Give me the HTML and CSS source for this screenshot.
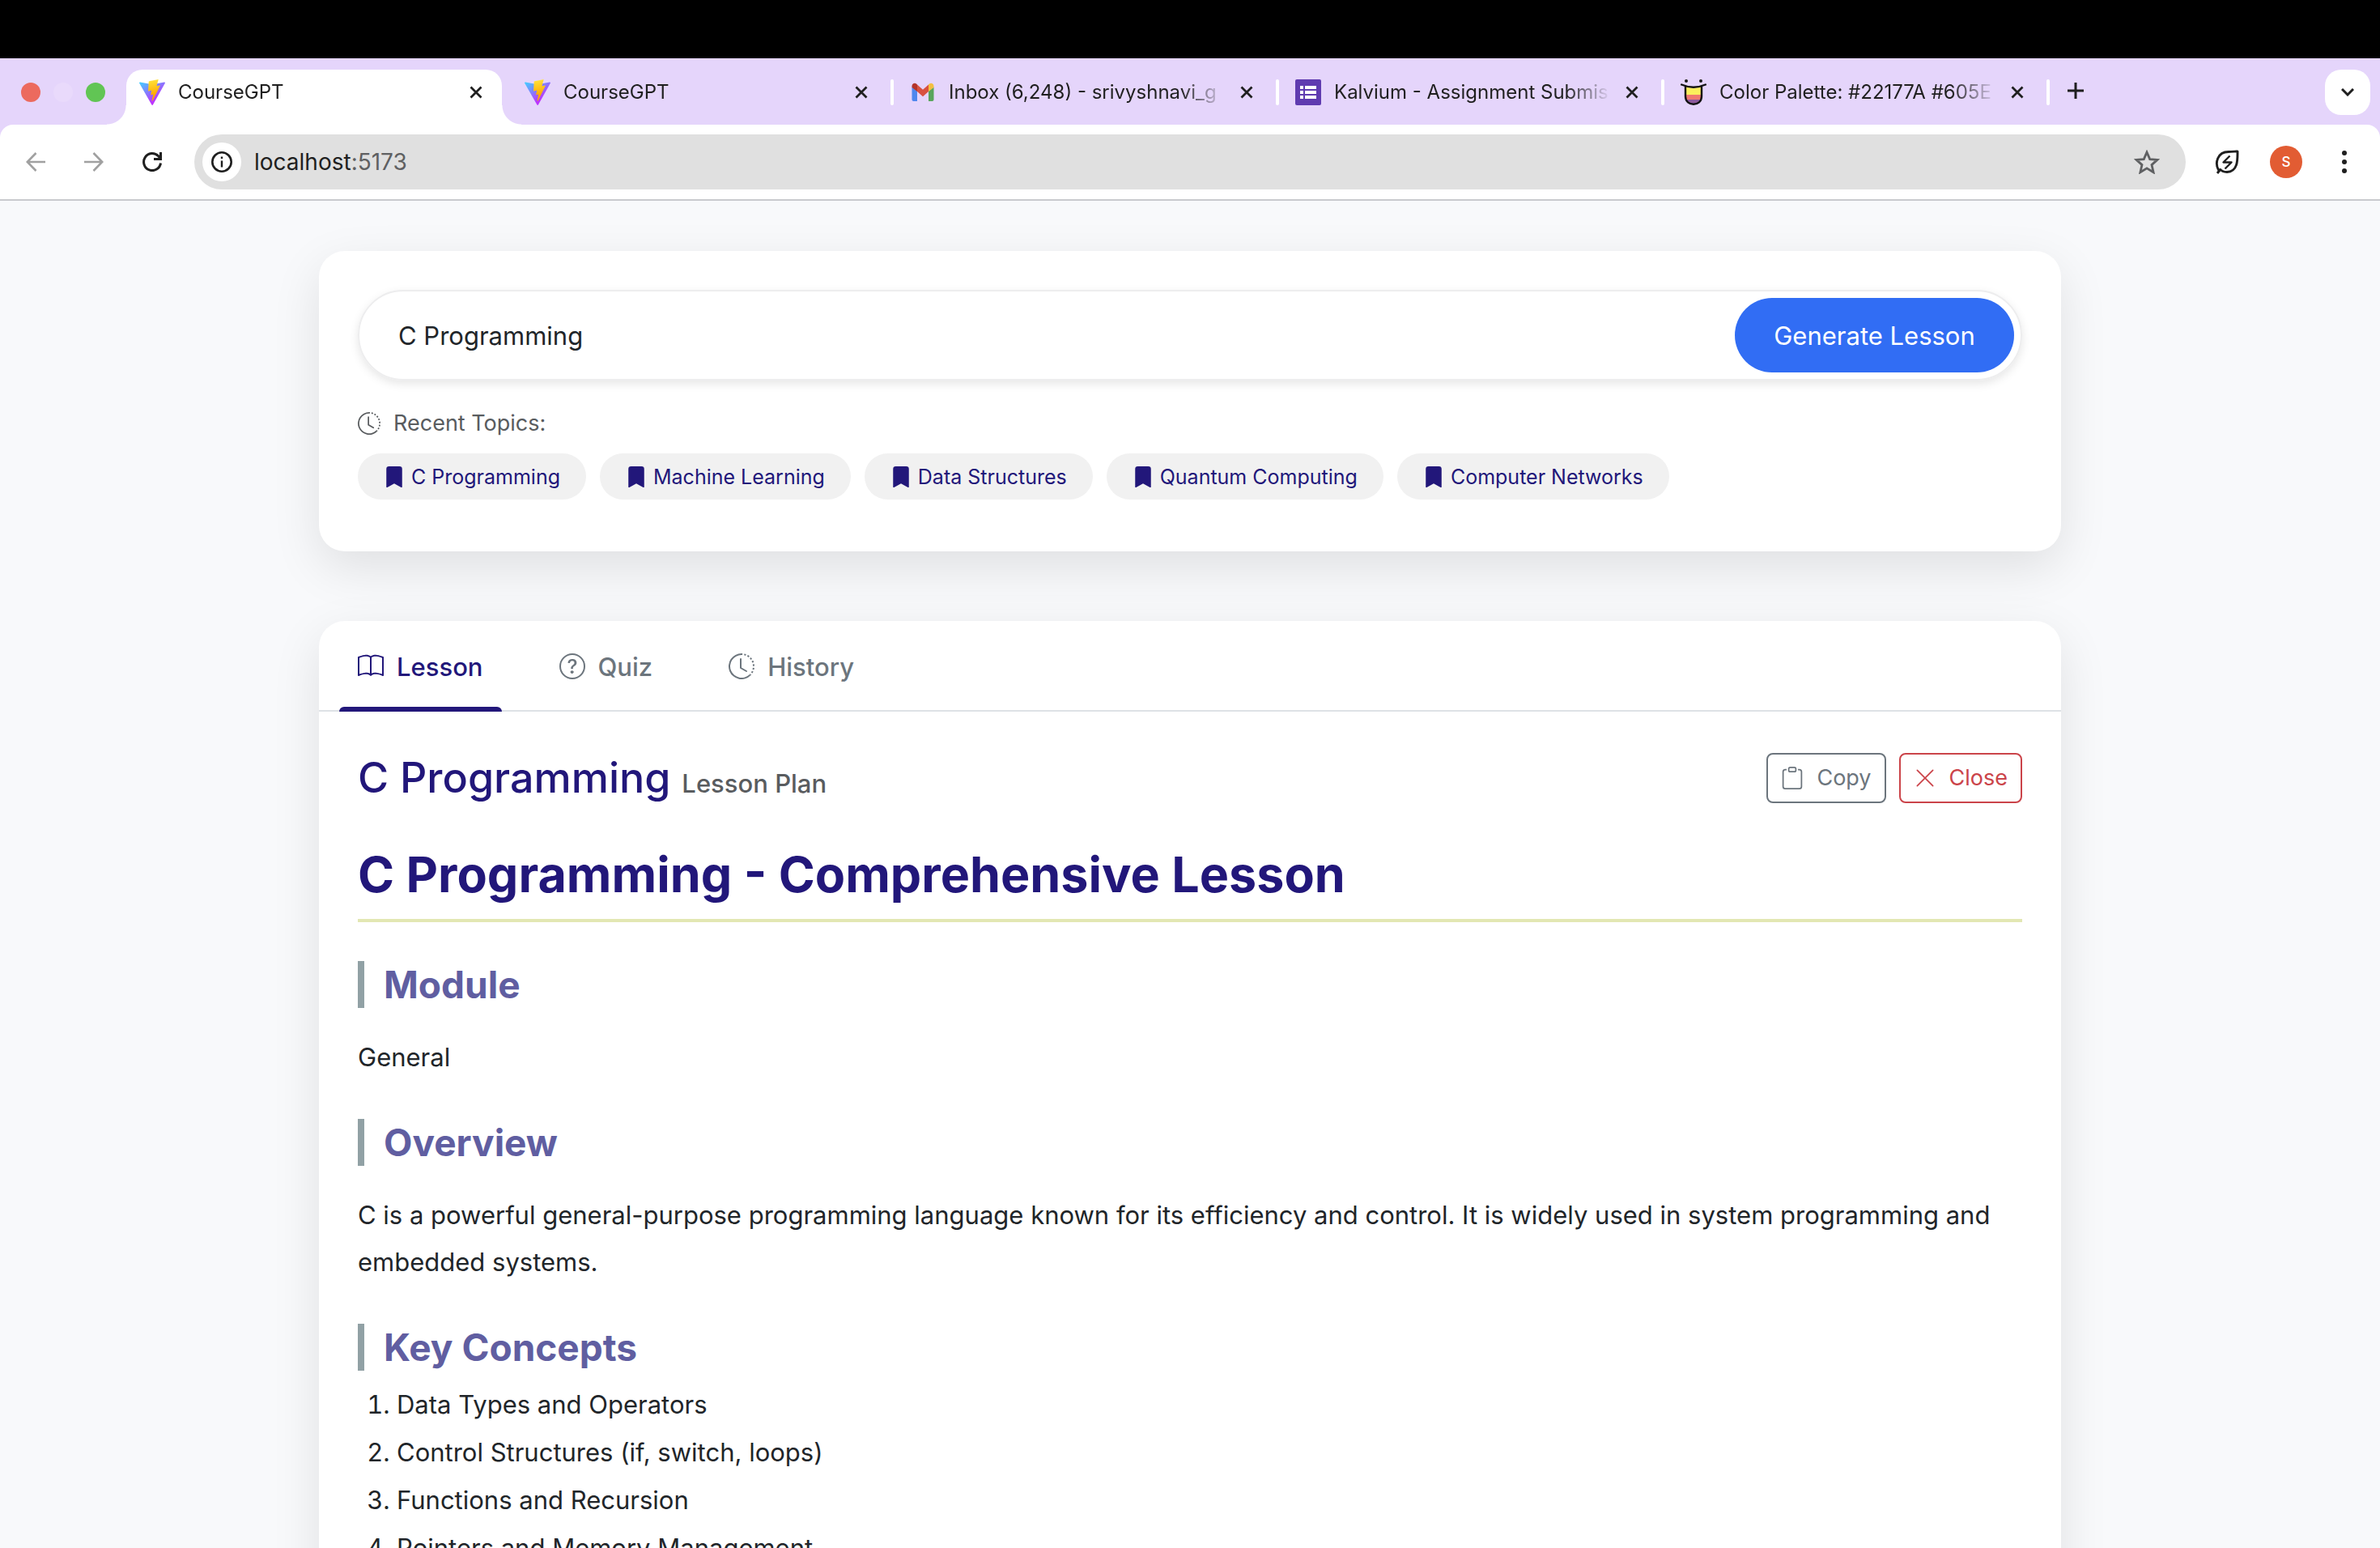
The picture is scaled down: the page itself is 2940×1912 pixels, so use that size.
FILE: index.html
```html
<!DOCTYPE html>
<html lang="en">
<head>
<meta charset="utf-8">
<meta name="viewport" content="width=device-width, initial-scale=1">
<title>CourseGPT</title>
<link rel="stylesheet" href="styles.css">
</head>
<body>
<svg class="sprite" aria-hidden="true">
  <defs>
    <linearGradient id="vite-a" x1="0" x2="0.6" y1="0" y2="0.8"><stop offset="0" stop-color="#41d1ff"/><stop offset="1" stop-color="#bd34fe"/></linearGradient>
    <linearGradient id="vite-b" x1="0.43" x2="0.5" y1="0.02" y2="0.73"><stop offset="0" stop-color="#ffea83"/><stop offset="0.08" stop-color="#ffdd35"/><stop offset="1" stop-color="#ffa800"/></linearGradient>
  </defs>
  <symbol id="vite" viewBox="0 0 256 257">
    <path fill="url(#vite-a)" d="M255.153 37.938L134.897 252.976c-2.483 4.44-8.862 4.466-11.382.048L.875 37.958c-2.746-4.814 1.371-10.646 6.827-9.67l120.385 21.517a6.537 6.537 0 0 0 2.322-.004l117.867-21.483c5.438-.991 9.574 4.796 6.877 9.62Z"/>
    <path fill="url(#vite-b)" d="M185.432.063L96.44 17.501a3.268 3.268 0 0 0-2.634 3.014l-5.474 92.456a3.268 3.268 0 0 0 3.997 3.378l24.777-5.718c2.318-.535 4.413 1.507 3.936 3.838l-7.361 36.047c-.495 2.426 1.782 4.5 4.151 3.78l15.304-4.649c2.372-.72 4.652 1.36 4.15 3.788l-11.698 56.621c-.732 3.542 3.979 5.473 5.943 2.437l1.313-2.028l72.516-144.72c1.215-2.423-.88-5.186-3.54-4.672l-25.505 4.922c-2.396.462-4.435-1.77-3.759-4.114l16.646-57.705c.677-2.35-1.37-4.583-3.769-4.113Z"/>
  </symbol>
  <symbol id="cross" viewBox="0 0 16 16"><path d="M1.500 1.500l13 13M14.500 1.500l-13 13" fill="none" stroke="currentColor" stroke-width="2.800"/></symbol>
  <symbol id="clock" viewBox="0 0 16 16">
    <path d="M8.515 1.019A7 7 0 0 0 8 1V0a8 8 0 0 1 .589.022zm2.004.45a7 7 0 0 0-.985-.299l.219-.976q.576.129 1.126.342zm1.37.71a7 7 0 0 0-.439-.27l.493-.87a8 8 0 0 1 .979.654l-.615.789a7 7 0 0 0-.418-.302zm1.834 1.79a7 7 0 0 0-.653-.796l.724-.69q.406.429.747.91zm.744 1.352a7 7 0 0 0-.214-.468l.893-.45a8 8 0 0 1 .45 1.088l-.95.313a7 7 0 0 0-.179-.483m.53 2.507a7 7 0 0 0-.1-1.025l.985-.17q.1.58.116 1.17zm-.131 1.538q.05-.254.081-.51l.993.123a8 8 0 0 1-.23 1.155l-.964-.267q.069-.247.12-.501m-.952 2.379q.276-.436.486-.908l.914.405q-.24.54-.555 1.038zm-.964 1.205q.183-.183.35-.378l.758.653a8 8 0 0 1-.401.432z"/>
    <path d="M8 1a7 7 0 1 0 4.95 11.95l.707.707A8.001 8.001 0 1 1 8 0z"/>
    <path d="M7.500 3a.5.5 0 0 1 .5.5v5.210l3.248 1.856a.5.5 0 0 1-.496.868l-3.500-2A.5.5 0 0 1 7 9V3.500a.5.5 0 0 1 .5-.5"/>
  </symbol>
  <symbol id="bookmark" viewBox="0 0 16 16"><path d="M2 2v13.500a.5.5 0 0 0 .74.439L8 13.069l5.260 2.870A.5.5 0 0 0 14 15.500V2a2 2 0 0 0-2-2H4a2 2 0 0 0-2 2"/></symbol>
</svg>

<div class="menubar"></div>

<header class="browser">
  <div class="tabstrip">
    <div class="lights">
      <span class="light light-red"></span>
      <span class="light light-off"></span>
      <span class="light light-green"></span>
    </div>
    <div class="tab tab-active">
      <svg class="favicon"><use href="#vite"/></svg>
      <span class="tab-title">CourseGPT</span>
      <button class="tab-close" aria-label="Close tab"><svg><use href="#cross"/></svg></button>
    </div>
    <span class="divider divider-hidden"></span>
    <div class="tab">
      <svg class="favicon"><use href="#vite"/></svg>
      <span class="tab-title">CourseGPT</span>
      <button class="tab-close" aria-label="Close tab"><svg><use href="#cross"/></svg></button>
    </div>
    <span class="divider"></span>
    <div class="tab">
      <svg class="favicon" viewBox="0 0 32 32">
        <path fill="#4f87ee" d="M2.500 9.500L9 14.500V27H4.500a2 2 0 0 1-2-2z"/>
        <path fill="#58a55c" d="M23 14.500l6.500-5V25a2 2 0 0 1-2 2H23z"/>
        <path fill="#d85140" d="M9 6.500l7 6.200 7-6.200V15l-7 6.200L9 15z"/>
        <path fill="#b3342b" d="M2.500 8.500c0-3.500 3.500-4.500 5.500-3L9 6.500V15l-6.500-5z"/>
        <path fill="#f2bf42" d="M29.500 8.500c0-3.500-3.500-4.500-5.500-3l-1 1V15l6.500-5z"/>
      </svg>
      <span class="tab-title">Inbox (6,248) - srivyshnavi_g</span>
      <button class="tab-close" aria-label="Close tab"><svg><use href="#cross"/></svg></button>
    </div>
    <span class="divider"></span>
    <div class="tab">
      <svg class="favicon" viewBox="0 0 32 32">
        <rect width="32" height="32" rx="2" fill="#5f3bb0"/>
        <path fill="#fff" d="M6 8h4v4H6zM12 8h14v4H12zM6 14h4v4H6zM12 14h14v4H12zM6 20h4v4H6zM12 20h14v4H12z"/>
      </svg>
      <span class="tab-title">Kalvium - Assignment Submis</span>
      <button class="tab-close" aria-label="Close tab"><svg><use href="#cross"/></svg></button>
    </div>
    <span class="divider"></span>
    <div class="tab">
      <svg class="favicon" viewBox="0 0 32 32">
        <circle cx="7" cy="2" r="2" fill="#1b1b1b"/><circle cx="25" cy="2" r="2" fill="#1b1b1b"/>
        <path fill="#fbee5c" d="M6 9q10 3 20 0v10H6z"/>
        <path fill="#ef7770" d="M6 19h20v6H6z"/>
        <path fill="#8d5a9c" d="M7 25h18q-3 5.500-9 5.500T7 25z"/>
        <path fill="none" stroke="#111" stroke-width="2.400" stroke-linecap="round" d="M1.200 6.500Q16 13 30.800 6.500M6 9v12c0 13 20 13 20 0V9"/>
      </svg>
      <span class="tab-title">Color Palette: #22177A #605E</span>
      <button class="tab-close" aria-label="Close tab"><svg><use href="#cross"/></svg></button>
    </div>
    <span class="divider"></span>
    <button class="new-tab" aria-label="New tab">
      <svg viewBox="0 0 20 20"><path d="M10 0v20M0 10h20" fill="none" stroke="currentColor" stroke-width="3"/></svg>
    </button>
    <button class="tab-search" aria-label="Search tabs">
      <svg viewBox="0 0 16 10"><path d="M1 1l7 7 7-7" fill="none" stroke="currentColor" stroke-width="3"/></svg>
    </button>
  </div>

  <div class="toolbar">
    <div class="navs">
      <button class="nav nav-off" aria-label="Back"><svg viewBox="0 0 24 24"><path d="M24 12H2M12.500 1L1.800 12l10.700 11" fill="none" stroke="currentColor" stroke-width="2.600"/></svg></button>
      <button class="nav nav-off" aria-label="Forward"><svg viewBox="0 0 24 24"><path d="M0 12h22M11.500 1l10.700 11-10.700 11" fill="none" stroke="currentColor" stroke-width="2.600"/></svg></button>
      <button class="nav" aria-label="Reload"><svg viewBox="0 0 24 24"><path d="M22.500 13.500A10.500 10.500 0 1 1 19.500 4.600L22 7.500" fill="none" stroke="currentColor" stroke-width="3"/><path d="M24 0v10H14V7h7V0z" fill="currentColor"/></svg></button>
    </div>
    <div class="omnibox">
      <button class="site-info" aria-label="Site information">
        <svg viewBox="0 0 26 26"><circle cx="13" cy="13" r="11.700" fill="none" stroke="currentColor" stroke-width="2.600"/><path d="M11.800 11.500h2.400v8h-2.400zM11.800 6.500h2.400v2.600h-2.400z" fill="currentColor"/></svg>
      </button>
      <div class="url" role="textbox" aria-label="Address">localhost<span class="port">:5173</span></div>
      <button class="star" aria-label="Bookmark this page">
        <svg viewBox="0 0 32 30"><path d="M16 3l3.700 8.600 9.300.8-7 6.200 2.100 9.200-8.100-4.900-8.100 4.900L10 18.600l-7-6.200 9.300-.8z" fill="none" stroke="currentColor" stroke-width="2.800"/></svg>
      </button>
    </div>
    <div class="actions">
      <button class="action" aria-label="Energy saver">
        <svg viewBox="0 0 32 32"><path d="M4.500 26C0 18 2.500 3.500 17 3.500c5 0 11-1 11-.5 0 9 1 25-13 25.500-5 0-7.500-2-9-4M3 30l4-5" fill="none" stroke="currentColor" stroke-width="2.900"/><path d="M18.500 8.500L10.500 16.500H20.500L12.500 24.500" fill="none" stroke="currentColor" stroke-width="2.400" stroke-linejoin="round"/></svg>
      </button>
      <button class="avatar" aria-label="Profile">S</button>
      <button class="action" aria-label="Menu">
        <svg viewBox="0 0 32 32"><circle cx="16" cy="5" r="3"/><circle cx="16" cy="16" r="3"/><circle cx="16" cy="27" r="3"/></svg>
      </button>
    </div>
  </div>
</header>

<main class="page">
  <section class="card search-card">
    <form class="search">
      <input class="search-input" type="text" value="C Programming" aria-label="Topic">
      <button class="search-button" type="button">Generate Lesson</button>
    </form>
    <div class="recent">
      <svg class="icon-sm"><use href="#clock"/></svg>
      <span>Recent Topics:</span>
    </div>
    <div class="chips">
      <button class="chip"><svg class="chip-icon"><use href="#bookmark"/></svg>C Programming</button>
      <button class="chip"><svg class="chip-icon"><use href="#bookmark"/></svg>Machine Learning</button>
      <button class="chip"><svg class="chip-icon"><use href="#bookmark"/></svg>Data Structures</button>
      <button class="chip"><svg class="chip-icon"><use href="#bookmark"/></svg>Quantum Computing</button>
      <button class="chip"><svg class="chip-icon"><use href="#bookmark"/></svg>Computer Networks</button>
    </div>
  </section>

  <section class="card lesson-card">
    <nav class="views">
      <button class="view view-active">
        <svg class="icon" viewBox="0 0 16 16"><path d="M1 2.828c.885-.37 2.154-.769 3.388-.893 1.330-.134 2.458.063 3.112.752v9.746c-.935-.53-2.120-.603-3.213-.493-1.180.12-2.370.461-3.287.811zm7.500-.141c.654-.689 1.782-.886 3.112-.752 1.234.124 2.503.523 3.388.893v9.923c-.918-.35-2.107-.692-3.287-.81-1.094-.111-2.278-.039-3.213.492zM8 1.783C7.015.936 5.587.81 4.287.94c-1.514.153-3.042.672-3.994 1.105A.5.5 0 0 0 0 2.500v11a.5.5 0 0 0 .707.455c.882-.4 2.303-.881 3.680-1.020 1.409-.142 2.590.087 3.223.877a.5.5 0 0 0 .78 0c.633-.79 1.814-1.019 3.222-.877 1.378.139 2.800.62 3.681 1.020A.5.5 0 0 0 16 13.500v-11a.5.5 0 0 0-.293-.455c-.952-.433-2.480-.952-3.994-1.105C10.413.809 8.985.936 8 1.783"/></svg>
        Lesson
      </button>
      <button class="view">
        <svg class="icon" viewBox="0 0 16 16"><path d="M8 15A7 7 0 1 1 8 1a7 7 0 0 1 0 14m0 1A8 8 0 1 0 8 0a8 8 0 0 0 0 16"/><path d="M5.255 5.786a.237.237 0 0 0 .241.247h.825c.138 0 .248-.113.266-.25.09-.656.54-1.134 1.342-1.134.686 0 1.314.343 1.314 1.168 0 .635-.374.927-.965 1.371-.673.489-1.206 1.060-1.168 1.987l.003.217a.25.25 0 0 0 .25.246h.811a.25.25 0 0 0 .25-.25v-.105c0-.718.273-.927 1.010-1.486.609-.463 1.244-.977 1.244-2.056 0-1.511-1.276-2.241-2.673-2.241-1.267 0-2.655.59-2.750 2.286m1.557 5.763c0 .533.425.927 1.010.927.609 0 1.028-.394 1.028-.927 0-.552-.42-.94-1.029-.94-.584 0-1.009.388-1.009.94"/></svg>
        Quiz
      </button>
      <button class="view">
        <svg class="icon"><use href="#clock"/></svg>
        History
      </button>
    </nav>

    <div class="lesson">
      <div class="lesson-head">
        <h3 class="topic">C Programming <small class="topic-kind">Lesson Plan</small></h3>
        <div class="lesson-actions">
          <button class="btn btn-copy">
            <svg class="icon-sm" viewBox="0 0 16 16"><path d="M4 1.500H3a2 2 0 0 0-2 2V14a2 2 0 0 0 2 2h10a2 2 0 0 0 2-2V3.500a2 2 0 0 0-2-2h-1v1h1a1 1 0 0 1 1 1V14a1 1 0 0 1-1 1H3a1 1 0 0 1-1-1V3.500a1 1 0 0 1 1-1h1z"/><path d="M9.500 1a.5.5 0 0 1 .5.5v1a.5.5 0 0 1-.5.5h-3a.5.5 0 0 1-.5-.5v-1a.5.5 0 0 1 .5-.5zm-3-1A1.500 1.500 0 0 0 5 1.500v1A1.500 1.500 0 0 0 6.500 4h3A1.500 1.500 0 0 0 11 2.500v-1A1.500 1.500 0 0 0 9.500 0z"/></svg>
            Copy
          </button>
          <button class="btn btn-close">
            <svg class="icon-sm" viewBox="0 0 16 16"><path d="M2.146 2.854a.5.5 0 1 1 .708-.708L8 7.293l5.146-5.147a.5.5 0 0 1 .708.708L8.707 8l5.147 5.146a.5.5 0 0 1-.708.708L8 8.707l-5.146 5.147a.5.5 0 0 1-.708-.708L7.293 8z"/></svg>
            Close
          </button>
        </div>
      </div>

      <article class="content">
        <h1>C Programming - Comprehensive Lesson</h1>
        <h2>Module</h2>
        <p>General</p>
        <h2>Overview</h2>
        <p>C is a powerful general-purpose programming language known for its efficiency and control. It is widely used in system programming and embedded systems.</p>
        <h2 class="before-list">Key Concepts</h2>
        <ol>
          <li>Data Types and Operators</li>
          <li>Control Structures (if, switch, loops)</li>
          <li>Functions and Recursion</li>
          <li>Pointers and Memory Management</li>
        </ol>
      </article>
    </div>
  </section>
</main>
</body>
</html>
```
FILE: styles.css
```css
* {
  box-sizing: border-box;
}

body {
  display: flex;
  flex-direction: column;
  height: 100vh;
  margin: 0;
  overflow: hidden;
  background: #f8f9fb;
  color: #212529;
  font-family: Inter, "Liberation Sans", sans-serif;
  font-size: 31px;
}

button {
  display: flex;
  align-items: center;
  justify-content: center;
  flex-shrink: 0;
  margin: 0;
  padding: 0;
  border: 0;
  background: none;
  color: inherit;
  font: inherit;
  white-space: nowrap;
}

svg {
  flex-shrink: 0;
  fill: currentColor;
}

.sprite {
  position: absolute;
  width: 0;
  height: 0;
}

/* ---------- browser chrome ---------- */

.menubar {
  flex: 0 0 72px;
  background: #000;
}

.browser {
  flex-shrink: 0;
  background: #e5d5fb;
  color: #1f1f1f;
}

.tabstrip {
  display: flex;
  align-items: flex-start;
  padding: 14px 12px 0 26px;
}

.lights {
  display: flex;
  align-items: center;
  gap: 16px;
  width: 130px;
  height: 56px;
}

.light {
  width: 24px;
  height: 24px;
  border-radius: 50%;
}

.light-red { background: #ec6a5e; }
.light-off { background: #e9dafb; }
.light-green { background: #61c554; }

.tab {
  position: relative;
  display: flex;
  align-items: center;
  flex: 0 1 464px;
  min-width: 0;
  height: 68px;
  padding: 0 20px 12px 16px;
}

.tab-active {
  border-radius: 20px 20px 0 0;
  background: #fff;
}

/* concave feet that join the active tab to the toolbar */
.tab-active::before,
.tab-active::after {
  content: "";
  position: absolute;
  bottom: 0;
  width: 24px;
  height: 24px;
}

.tab-active::before {
  right: 100%;
  background: radial-gradient(circle at 0 0, transparent 23px, #fff 24px);
}

.tab-active::after {
  left: 100%;
  background: radial-gradient(circle at 100% 0, transparent 23px, #fff 24px);
}

.favicon {
  width: 32px;
  height: 32px;
  margin-right: 16px;
}

.tab-title {
  flex: 1;
  min-width: 0;
  overflow: hidden;
  font-size: 24px;
  line-height: 32px;
  white-space: nowrap;
  -webkit-mask-image: linear-gradient(to left, transparent, #000 56px);
  mask-image: linear-gradient(to left, transparent, #000 56px);
}

.tab-close {
  width: 24px;
  height: 24px;
  margin-left: 14px;
}

.tab-close svg {
  width: 16px;
  height: 16px;
}

.divider {
  flex: 0 0 4px;
  height: 32px;
  margin: 12px 4px 0;
  border-radius: 2px;
  background: #fff;
}

.divider-hidden {
  visibility: hidden;
}

.new-tab {
  width: 40px;
  height: 52px;
  margin-left: 8px;
}

.new-tab svg {
  width: 20px;
  height: 20px;
}

.tab-search {
  width: 56px;
  height: 56px;
  margin-left: auto;
  border-radius: 20px;
  background: #fff;
}

.tab-search svg {
  width: 16px;
  height: 10px;
}

.toolbar {
  display: flex;
  align-items: center;
  height: 94px;
  padding: 0 28px 0 32px;
  border-bottom: 2px solid #c9cace;
  border-radius: 16px 16px 0 0;
  background: #fff;
}

.navs {
  display: flex;
  gap: 48px;
  margin-right: 40px;
}

.nav {
  width: 24px;
  height: 48px;
}

.nav svg {
  width: 24px;
  height: 24px;
}

.nav-off {
  color: #a0a0a0;
}

.omnibox {
  display: flex;
  align-items: center;
  flex: 1;
  min-width: 0;
  height: 68px;
  padding: 0 32px 0 10px;
  border-radius: 34px;
  background: #e0e0e0;
}

.site-info {
  width: 48px;
  height: 48px;
  border-radius: 50%;
  background: #fff;
}

.site-info svg {
  width: 26px;
  height: 26px;
}

.url {
  flex: 1;
  margin-left: 16px;
  font-size: 28px;
}

.port {
  color: #5f6062;
}

.star {
  color: #5f6062;
}

.star svg {
  width: 32px;
  height: 30px;
}

.actions {
  display: flex;
  align-items: center;
  gap: 36px;
  margin-left: 36px;
}

.action svg {
  width: 32px;
  height: 32px;
}

.avatar {
  width: 40px;
  height: 40px;
  border-radius: 50%;
  background: #e25c33;
  color: #fff;
  font-size: 17px;
  font-weight: 500;
}

/* ---------- application ---------- */

.page {
  flex: 1;
  min-height: 0;
  overflow: hidden;
  padding: 62px 48px 0;
}

.card {
  max-width: 2152px;
  margin: 0 auto 86px;
  border-radius: 32px;
  background: #fff;
  box-shadow: 0 20px 60px rgba(0, 0, 0, 0.1);
}

.search-card {
  padding: 48px 48px 64px;
}

.search {
  display: flex;
  height: 112px;
  padding: 8px;
  border: 2px solid #ededee;
  border-radius: 56px;
  box-shadow: 0 4px 12px rgba(0, 0, 0, 0.1);
}

.search-input {
  flex: 1;
  min-width: 0;
  padding: 0 40px;
  border: 0;
  background: none;
  color: inherit;
  font: inherit;
  outline: 0;
}

.search-button {
  width: 345px;
  border-radius: 46px;
  background: #316df4;
  color: #fff;
}

.recent {
  display: flex;
  align-items: center;
  gap: 16px;
  margin: 32px 0 16px;
  color: #595c5f;
  font-size: 27px;
  line-height: 42px;
}

.icon {
  width: 32px;
  height: 32px;
}

.icon-sm {
  width: 28px;
  height: 28px;
}

.chips {
  display: flex;
  flex-wrap: wrap;
  gap: 17px;
}

.chip {
  gap: 8px;
  height: 57px;
  padding: 0 32px;
  border-radius: 29px;
  background: #f1f1f1;
  color: #22177a;
  font-size: 25px;
}

.chip-icon {
  width: 26px;
  height: 26px;
}

.views {
  display: flex;
  gap: 48px;
  height: 112px;
  padding: 0 25px;
  border-bottom: 2px solid #dee2e6;
}

.view {
  position: relative;
  gap: 16px;
  height: 112px;
  padding: 0 23px;
  color: #6c757d;
  font-weight: 500;
}

.view-active {
  color: #22177a;
}

.view-active::after {
  content: "";
  position: absolute;
  right: 0;
  bottom: 0;
  left: 0;
  height: 6px;
  border-radius: 6px 6px 0 0;
  background: #22177a;
}

.lesson {
  padding: 48px;
}

.lesson-head {
  display: flex;
  align-items: center;
  justify-content: space-between;
  margin-bottom: 48px;
}

.topic {
  margin: 0;
  color: #22177a;
  font-size: 52px;
  font-weight: 500;
  line-height: 67px;
}

.topic-kind {
  color: #595c5f;
  font-size: 31px;
  line-height: 32px;
}

.lesson-actions {
  display: flex;
  gap: 16px;
}

.btn {
  gap: 16px;
  height: 62px;
  padding: 0 16px;
  border: 2px solid currentColor;
  border-radius: 8px;
  font-size: 27px;
}

.btn-copy { color: #6c757d; }
.btn-close { color: #cb444a; }

.content h1 {
  margin: 0 0 48px;
  padding-bottom: 16px;
  border-bottom: 4px solid #e3e7b3;
  color: #22177a;
  font-size: 61px;
  font-weight: 700;
  line-height: 77px;
}

.content h2 {
  margin: 47px 0 32px;
  padding-left: 24px;
  border-left: 8px solid #91a1a5;
  color: #605ea1;
  font-size: 46px;
  font-weight: 700;
  line-height: 58px;
}

.content h2.before-list {
  margin-bottom: 12px;
}

.content p {
  margin: 0;
  line-height: 58px;
}

.content ol {
  margin: 0;
  padding-left: 48px;
  line-height: 59px;
}
```
